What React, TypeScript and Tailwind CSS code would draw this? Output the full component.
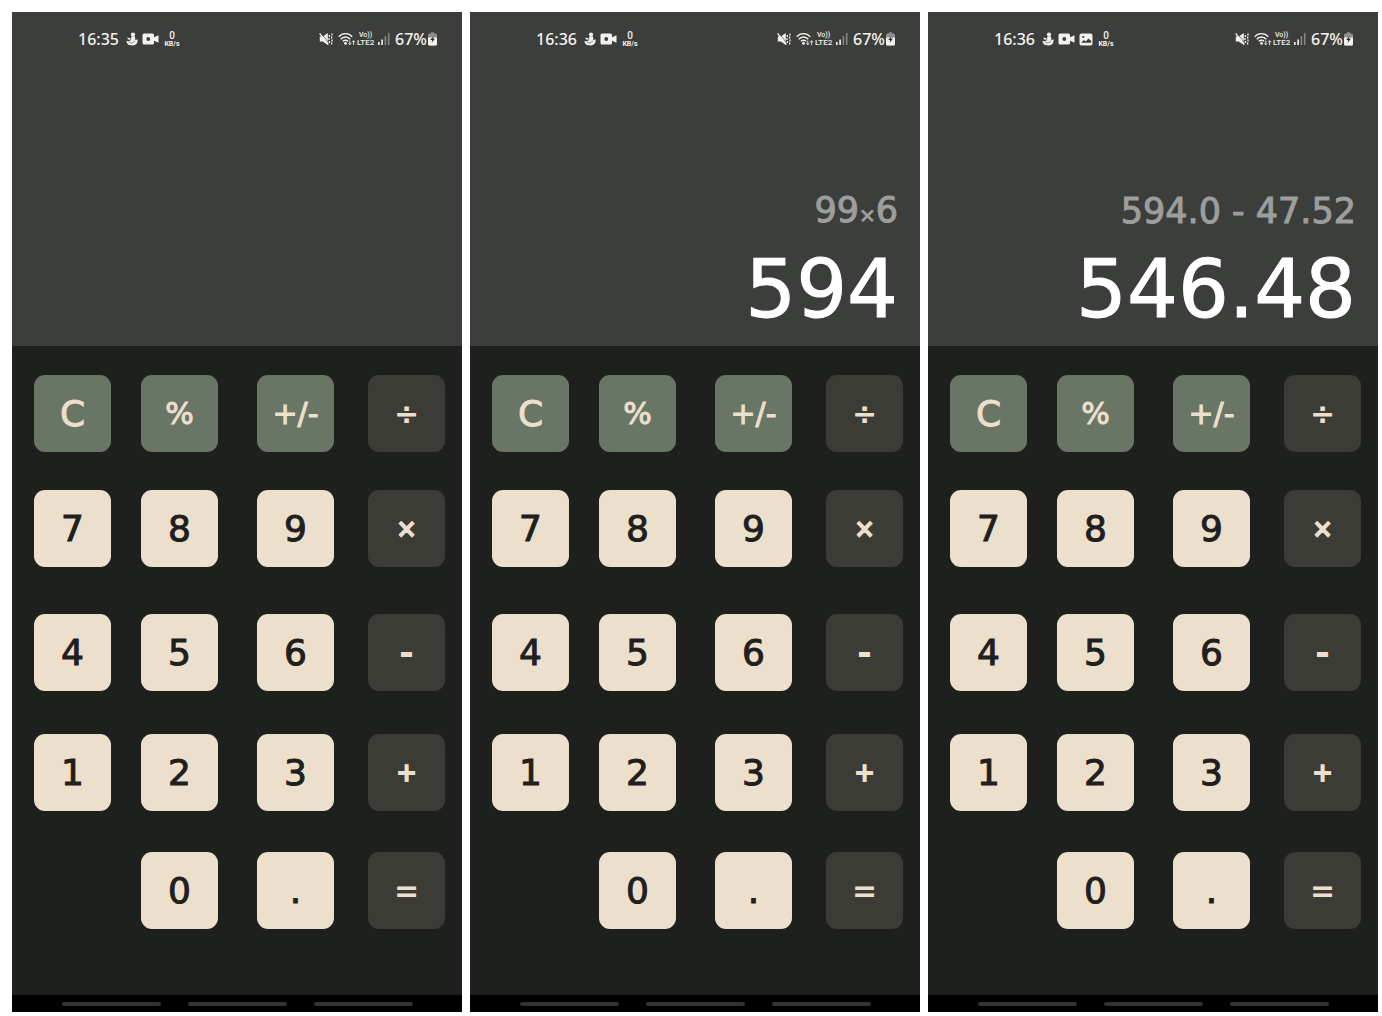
import React from "react";

type Tone = "green" | "cream" | "dark";
type Key = { label: string; tone: Tone; size: string; name?: string };

const op = "text-3xl font-bold";
const digit = "text-4xl [-webkit-text-stroke:1px]";

const rows: { gap: string; keys: (Key | null)[] }[] = [
  {
    gap: "mt-[29px]",
    keys: [
      { label: "C", tone: "green", size: digit, name: "Clear" },
      { label: "%", tone: "green", size: "text-3xl [-webkit-text-stroke:1px]", name: "Percent" },
      {
        label: "+/-",
        tone: "green",
        size: "text-3xl [-webkit-text-stroke:1px]",
        name: "Toggle sign",
      },
      { label: "÷", tone: "dark", size: op, name: "Divide" },
    ],
  },
  {
    gap: "mt-[38px]",
    keys: [
      { label: "7", tone: "cream", size: digit },
      { label: "8", tone: "cream", size: digit },
      { label: "9", tone: "cream", size: digit },
      { label: "×", tone: "dark", size: "text-2xl [-webkit-text-stroke:2px]", name: "Multiply" },
    ],
  },
  {
    gap: "mt-[47px]",
    keys: [
      { label: "4", tone: "cream", size: digit },
      { label: "5", tone: "cream", size: digit },
      { label: "6", tone: "cream", size: digit },
      { label: "-", tone: "dark", size: "text-4xl font-bold", name: "Subtract" },
    ],
  },
  {
    gap: "mt-[43px]",
    keys: [
      { label: "1", tone: "cream", size: digit },
      { label: "2", tone: "cream", size: digit },
      { label: "3", tone: "cream", size: digit },
      { label: "+", tone: "dark", size: "text-2xl [-webkit-text-stroke:2px]", name: "Add" },
    ],
  },
  {
    gap: "mt-[41px]",
    keys: [
      null,
      { label: "0", tone: "cream", size: digit },
      { label: ".", tone: "cream", size: digit, name: "Decimal point" },
      { label: "=", tone: "dark", size: op, name: "Equals" },
    ],
  },
];

const tones: Record<Tone, string> = {
  green: "bg-[#697565] text-[#ecdfcc]",
  cream: "bg-[#ecdfcc] text-[#1e201e]",
  dark: "bg-[#3c3c36] text-[#ecdfcc]",
};

function PersonIcon() {
  return (
    <svg className="h-[14px] w-3" viewBox="0 0 12 14" fill="currentColor" aria-hidden="true">
      <circle cx="7" cy="2.6" r="2.1" />
      <path d="M5.2 4.6 8.8 4.2 9.4 7 8.6 9 5 8.6Z" />
      <path d="M1.2 5.6 4.6 6.2 4.4 7.8 2 7.4Z" />
      <path d="M.4 9 3 9.2 5 8 8.6 8.6 11.6 7.2C12 11 10 13.4 6.4 13.4 3 13.4 1 12.4.4 9Z" />
      <path d="M2.8 9.8 5.4 11.4 8.8 9.4" fill="none" stroke="#3c3e3b" strokeWidth="0.6" />
    </svg>
  );
}

function CameraIcon() {
  return (
    <svg className="h-3 w-[17px]" viewBox="0 0 17 12" aria-hidden="true">
      <rect x="0.5" y="0.5" width="11.5" height="11" rx="1.5" fill="currentColor" />
      <path d="M11.5 4.6 16.5 2.2V9.8L11.5 7.4Z" fill="currentColor" />
      <circle cx="6.3" cy="6" r="1.9" fill="#3c3e3b" />
    </svg>
  );
}

function PictureIcon() {
  return (
    <svg className="h-[13px] w-[14px]" viewBox="0 0 14 13" aria-hidden="true">
      <rect x="0.5" y="0.5" width="13" height="12" rx="2" fill="currentColor" />
      <circle cx="4.2" cy="4" r="1.1" fill="#3c3e3b" />
      <path d="M2 9.8 5 7 6.8 8.4 9.4 5.4 12.2 8V9.8Z" fill="#3c3e3b" />
    </svg>
  );
}

function MuteIcon() {
  return (
    <svg className="h-[14px] w-[14px]" viewBox="0 0 14 14" fill="none" stroke="currentColor" aria-hidden="true">
      <path d="M.8 4.6H3.8L8.8 1V13L3.8 9.4H.8Z" fill="currentColor" stroke="none" />
      <path d="M1.8 1 10 11.4" stroke="#3c3e3b" strokeWidth="0.7" />
      <path d="M.6 1.4 9.4 12.6" strokeWidth="1.4" />
      <path d="M10.4 3V5M10 6V8M10.4 9V11" strokeWidth="1.3" />
      <path d="M13 1.5V3.5M12.6 4.5V6.5M13 7.5V9.5M12.6 10.5V12.5" strokeWidth="1.3" />
    </svg>
  );
}

function WifiIcon() {
  return (
    <svg className="h-[14px] w-[18px]" viewBox="0 0 18 14" fill="none" stroke="currentColor" aria-hidden="true">
      <path d="M.8 4.8C4.2.6 10.8.6 14.2 4.8M2.8 7.2C5.2 4.2 9.8 4.2 12.2 7.2M4.9 9.4C6.2 7.8 8.8 7.8 10.1 9.4" strokeWidth="1.4" />
      <circle cx="7.5" cy="11.4" r="1.4" fill="currentColor" stroke="none" />
      <path d="M11.8 8.5V12.5M10.4 11.2 11.8 12.7 13.2 11.2" strokeWidth="0.9" />
      <path d="M15.6 13V8.8M14.2 10.2 15.6 8.7 17 10.2" strokeWidth="0.9" />
    </svg>
  );
}

function SignalIcon() {
  return (
    <svg className="h-3 w-3" viewBox="0 0 12 12" fill="currentColor" aria-hidden="true">
      <rect x="0" y="9" width="1.6" height="3" />
      <rect x="3.3" y="6.5" width="1.6" height="5.5" />
      <rect x="6.6" y="3" width="1.6" height="9" opacity="0.4" />
      <rect x="9.9" y="0" width="1.6" height="12" opacity="0.4" />
    </svg>
  );
}

function BatteryIcon() {
  return (
    <svg className="h-[14px] w-[9px]" viewBox="0 0 9 14" aria-hidden="true">
      <rect x="2.8" y="0.3" width="3.4" height="2" fill="#8e8f8c" />
      <rect x="0" y="1.6" width="9" height="12" rx="1.5" fill="#8e8f8c" />
      <path d="M0 5.4H9V12.1A1.5 1.5 0 0 1 7.5 13.6H1.5A1.5 1.5 0 0 1 0 12.1Z" fill="currentColor" />
      <path d="M5.5 4.2 2.2 8H4.2L3.6 10.8 6.9 6.8H5Z" fill="#2b2c2a" />
    </svg>
  );
}

function StatusBar({ time, picture }: { time: string; picture?: boolean }) {
  return (
    <div className="flex h-4 items-center justify-between pr-[25px] pl-[66px] font-['Noto_Sans',sans-serif] text-[#f2f2f0]">
      <div className="flex items-center">
        <span className="text-base leading-4 font-medium">{time}</span>
        <span className="ml-[7px] flex items-center gap-1">
          <PersonIcon />
          <CameraIcon />
          {picture && <PictureIcon />}
          <span className="flex w-[18px] flex-col items-center font-['Roboto',sans-serif] font-medium">
            <span className="text-[10px] leading-[10px]">0</span>
            <span className="text-[7px] leading-[7px] font-bold">KB/s</span>
          </span>
        </span>
      </div>
      <div className="flex items-center">
        <MuteIcon />
        <span className="ml-[5px] flex">
          <WifiIcon />
        </span>
        <span className="mr-[3px] flex w-[19px] flex-col items-center font-['Roboto',sans-serif] font-medium">
          <span className="text-[7px] leading-[7px]">Vo))</span>
          <span className="text-[8px] leading-[8px]">LTE2</span>
        </span>
        <SignalIcon />
        <span className="mr-px ml-[5px] text-base leading-4 font-medium">67%</span>
        <BatteryIcon />
      </div>
    </div>
  );
}

function KeyButton({ k }: { k: Key }) {
  return (
    <button
      type="button"
      aria-label={k.name}
      className={`flex h-[77px] w-[77px] items-center justify-center rounded-[11px] ${k.size} ${tones[k.tone]}`}
    >
      {k.label}
    </button>
  );
}

function Phone(props: { time: string; picture?: boolean; expression?: React.ReactNode; result?: string }) {
  return (
    <section className="flex min-w-0 flex-1 flex-col bg-[#1e201e] font-['DejaVu_Sans',sans-serif]">
      <div className="flex min-h-[334px] flex-col justify-between bg-[#3c3e3b] pt-[19px] pb-4">
        <StatusBar time={props.time} picture={props.picture} />
        <output className="flex flex-col items-end gap-[21px] pr-[22px]">
          <span className="text-[35px] leading-9 text-[#9d9e9c] [-webkit-text-stroke:1px]">{props.expression}</span>
          <span className="text-[80px] leading-[80px] text-white [-webkit-text-stroke:1px]">{props.result}</span>
        </output>
      </div>
      <div className="flex-1 pr-[17px] pl-[22px]">
        {rows.map((row, i) => (
          <div key={i} className={`grid grid-cols-[107fr_116fr_111fr_77px] ${row.gap}`}>
            {row.keys.map((k, j) => (k ? <KeyButton key={j} k={k} /> : <span key={j} />))}
          </div>
        ))}
      </div>
      <div className="flex h-[17px] items-center justify-center gap-[27px] bg-black">
        <span className="h-1 w-[99px] rounded-full bg-[#333333]" />
        <span className="h-1 w-[99px] rounded-full bg-[#333333]" />
        <span className="h-1 w-[99px] rounded-full bg-[#333333]" />
      </div>
    </section>
  );
}

export default function App() {
  return (
    <main className="flex min-h-screen gap-2 bg-white pt-3 pr-1 pb-1 pl-3">
      <Phone time="16:35" />
      <Phone
        time="16:36"
        expression={
          <>
            99<span className="text-xl">×</span>6
          </>
        }
        result="594"
      />
      <Phone time="16:36" picture expression="594.0 - 47.52" result="546.48" />
    </main>
  );
}
